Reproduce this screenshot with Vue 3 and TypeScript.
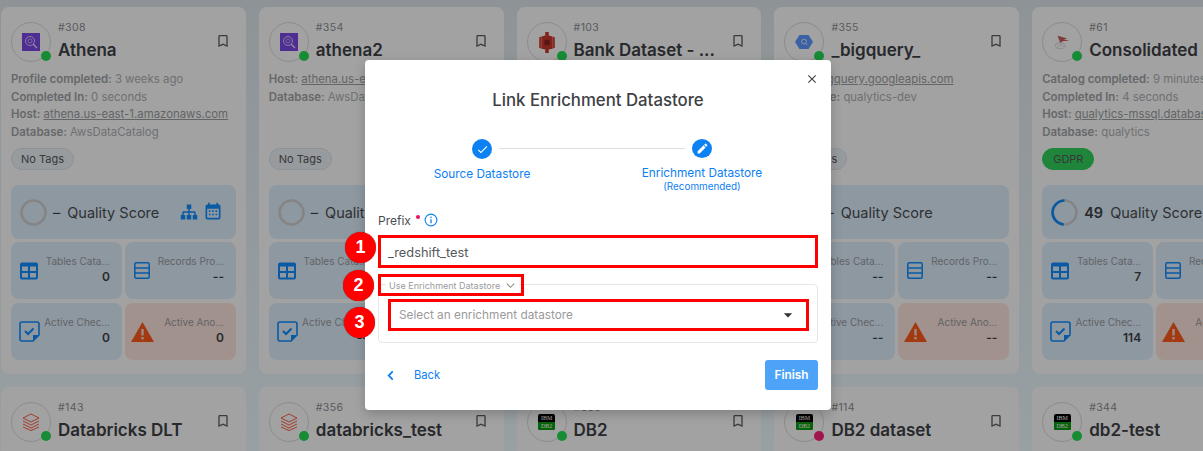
<script setup lang="ts">
interface Meta {
  label: string
  value: string
  link?: boolean
}

interface Card {
  id: number
  name: string
  logo: string
  status?: string
  meta: Meta[]
  tag: string
  score: string
  progress?: number
  tools?: boolean
  tables: string
  records: string
  checks: string
  anomalies: string
}

const cards: Card[] = [
  {
    id: 308, name: "Athena", logo: "athena",
    meta: [
      { label: "Profile completed", value: "3 weeks ago" },
      { label: "Completed In", value: "0 seconds" },
      { label: "Host", value: "athena.us-east-1.amazonaws.com", link: true },
      { label: "Database", value: "AwsDataCatalog" },
    ],
    tag: "No Tags", score: "–", tools: true, tables: "0", records: "--", checks: "0", anomalies: "0",
  },
  {
    id: 354, name: "athena2", logo: "athena",
    meta: [
      { label: "Host", value: "athena.us-east-1.amazonaws.com", link: true },
      { label: "Database", value: "AwsDataCatalog" },
    ],
    tag: "No Tags", score: "–", tables: "--", records: "--", checks: "--", anomalies: "--",
  },
  {
    id: 103, name: "Bank Dataset - ...", logo: "s3",
    meta: [],
    tag: "No Tags", score: "–", tables: "--", records: "--", checks: "--", anomalies: "--",
  },
  {
    id: 355, name: "_bigquery_", logo: "bigquery",
    meta: [
      { label: "Host", value: "bigquery.googleapis.com", link: true },
      { label: "Database", value: "qualytics-dev" },
    ],
    tag: "No Tags", score: "–", tables: "--", records: "--", checks: "--", anomalies: "--",
  },
  {
    id: 61, name: "Consolidated Balance", logo: "mssql",
    meta: [
      { label: "Catalog completed", value: "9 minutes ago" },
      { label: "Completed In", value: "4 seconds" },
      { label: "Host", value: "qualytics-mssql.database.windows.net", link: true },
      { label: "Database", value: "qualytics" },
    ],
    tag: "GDPR", score: "49", progress: 49, tables: "7", records: "--", checks: "114", anomalies: "--",
  },
]

const lowerCards = [
  { id: 143, name: "Databricks DLT", logo: "databricks", status: "ok" },
  { id: 356, name: "databricks_test", logo: "databricks", status: "ok" },
  { id: 369, name: "DB2", logo: "db2", status: "ok" },
  { id: 114, name: "DB2 dataset", logo: "db2", status: "bad" },
  { id: 344, name: "db2-test", logo: "db2", status: "ok" },
]

const bookmark = "M17,18L12,15.82L7,18V5H17M17,3H7A2,2 0 0,0 5,5V21L12,18L19,21V5C19,3.89 18.1,3 17,3Z"
</script>

<template>
  <div class="page">
    <div class="grid">
      <article v-for="card in cards" :key="card.id" class="card">
        <header class="head">
          <div class="avatar">
            <svg v-if="card.logo === 'athena'" class="logo" viewBox="0 0 18 18" width="18" height="18">
              <rect width="18" height="18" fill="#7c48e8" />
              <circle cx="8" cy="8" r="4.5" fill="none" stroke="#d8c8f5" stroke-width="1" />
              <circle cx="8" cy="8" r="2" fill="none" stroke="#d8c8f5" stroke-width=".7" />
              <path d="M11.3 11.3L15 15" stroke="#e4daf8" stroke-width="1.3" />
            </svg>
            <svg v-else-if="card.logo === 's3'" class="logo" viewBox="0 0 18 24" width="16" height="21">
              <path d="M7 0h4v4l4 1v14l-4 1v4H7v-4l-4-1V5l4-1z" fill="#c8372e" />
              <path d="M0 6l3-1v14l-3-1zM18 6l-3-1v14l3-1z" fill="#d8443a" />
              <rect x="6" y="9" width="6" height="6" fill="#8c221c" />
            </svg>
            <svg v-else-if="card.logo === 'bigquery'" class="logo" viewBox="0 0 26 20" width="18" height="14">
              <path d="M6.5 0h13L26 10l-6.500 10h-13L0 10z" fill="#5a98ff" />
              <circle cx="13" cy="9.500" r="3.500" fill="none" stroke="#dfe8fa" stroke-width="1.400" />
              <path d="M15.500 12l2.500 2.500" stroke="#dfe8fa" stroke-width="1.400" />
            </svg>
            <svg v-else-if="card.logo === 'mssql'" class="logo" viewBox="0 0 20 20" width="18" height="18">
              <path d="M5 3l11 3-4 1 6 2-7 0-3 3-1-4z" fill="#c85a60" />
              <ellipse cx="8" cy="14" rx="5.500" ry="3.500" fill="none" stroke="#d4d6d8" stroke-width="1" />
              <path d="M3 12l10 3M4 16l8-4" stroke="#d4d6d8" stroke-width=".6" />
            </svg>
            <span class="dot" />
          </div>
          <div class="title">
            <span class="num">#{{ card.id }}</span>
            <h2 class="name">{{ card.name }}</h2>
          </div>
          <svg class="mark" viewBox="0 0 24 24" width="16" height="16"><path :d="bookmark" /></svg>
        </header>

        <div class="meta">
          <p v-for="m in card.meta" :key="m.label">
            <b>{{ m.label }}:</b> <span :class="{ link: m.link }">{{ m.value }}</span>
          </p>
        </div>

        <span class="tag" :class="{ green: card.tag === 'GDPR' }">{{ card.tag }}</span>

        <div class="quality">
          <svg class="ring" viewBox="0 0 26 26" width="27" height="27">
            <circle cx="13" cy="13" r="11.500" fill="none" stroke="#cfcfcf" stroke-width="2.500" />
            <circle
              v-if="card.progress"
              cx="13" cy="13" r="11.500" fill="none" stroke="#108cff" stroke-width="2.500"
              pathLength="100" :stroke-dasharray="`${card.progress} 100`" transform="rotate(-90 13 13) scale(1 -1) translate(0 -26)"
            />
          </svg>
          <b class="score" :class="{ dash: !card.progress }">{{ card.score }}</b>
          <span class="qlabel">Quality Score</span>
          <div v-if="card.tools" class="tools">
            <svg viewBox="0 0 24 24" width="18" height="18"><path d="M9,2V8H11V11H5C3.89,11 3,11.89 3,13V16H1V22H7V16H5V13H11V16H9V22H15V16H13V13H19V16H17V22H23V16H21V13C21,11.89 20.1,11 19,11H13V8H15V2H9Z" /></svg>
            <svg viewBox="0 0 24 24" width="20" height="20"><path d="M9,10V12H7V10H9M13,10V12H11V10H13M17,10V12H15V10H17M19,3A2,2 0 0,1 21,5V19A2,2 0 0,1 19,21H5C3.89,21 3,20.1 3,19V5A2,2 0 0,1 5,3H6V1H8V3H16V1H18V3H19M19,19V8H5V19H19M9,14V16H7V14H9M13,14V16H11V14H13M17,14V16H15V14H17Z" /></svg>
          </div>
        </div>

        <div class="tiles">
          <div class="tile">
            <svg class="ticon" viewBox="0 0 20 18" width="20" height="18">
              <rect x="2" y="1.500" width="16" height="15" rx="1" fill="none" stroke="#108cff" stroke-width="2" />
              <path d="M2 3h16" stroke="#108cff" stroke-width="3" />
              <path d="M2 10h16M10 3v14" stroke="#108cff" stroke-width="2" />
            </svg>
            <div class="tbody"><span>Tables Cata...</span><b>{{ card.tables }}</b></div>
          </div>
          <div class="tile">
            <svg class="ticon narrow" viewBox="0 0 16 17" width="16" height="17">
              <rect x=".8" y=".8" width="14.400" height="15.400" rx="1.500" fill="none" stroke="#108cff" stroke-width="1.500" />
              <path d="M1 6h14M1 11h14" stroke="#108cff" stroke-width="1.500" />
            </svg>
            <div class="tbody"><span>Records Pro...</span><b>{{ card.records }}</b></div>
          </div>
          <div class="tile">
            <svg class="ticon" viewBox="0 0 21 21" width="21" height="21">
              <path d="M3 1h15a2 2 0 0 1 2 2v11l-6 6H3a2 2 0 0 1-2-2V3a2 2 0 0 1 2-2z" fill="none" stroke="#108cff" stroke-width="1.600" />
              <path d="M20 14h-6v6z" fill="#108cff" />
              <path d="M6 10l3 3 5.500-5.500" fill="none" stroke="#108cff" stroke-width="2" />
            </svg>
            <div class="tbody"><span>Active Chec...</span><b>{{ card.checks }}</b></div>
          </div>
          <div class="tile alert">
            <svg class="ticon wide" viewBox="0 0 23 20" width="23" height="20">
              <path d="M11.500 0L23 20H0z" fill="#ff5a19" />
              <rect x="10.300" y="7" width="2.400" height="6.500" fill="#f3d8d0" />
              <rect x="10.300" y="15" width="2.400" height="2.400" fill="#f3d8d0" />
            </svg>
            <div class="tbody"><span>Active Ano...</span><b>{{ card.anomalies }}</b></div>
          </div>
        </div>
      </article>

      <article v-for="card in lowerCards" :key="card.id" class="card">
        <header class="head">
          <div class="avatar">
            <svg v-if="card.logo === 'databricks'" class="logo" viewBox="0 0 18 18" width="18" height="18" fill="none" stroke="#ff5d44" stroke-width="1">
              <path d="M9 1l8 4-8 4-8-4zM1 8l8 4 8-4M1 11l8 4 8-4M1 14l8 3.500 8-3.500" />
            </svg>
            <div v-else class="db2">
              <span class="ibm">IBM</span>
              <span class="db2-low">DB2</span>
            </div>
            <span class="dot" :class="{ bad: card.status === 'bad' }" />
          </div>
          <div class="title">
            <span class="num">#{{ card.id }}</span>
            <h2 class="name">{{ card.name }}</h2>
          </div>
          <svg class="mark" viewBox="0 0 24 24" width="16" height="16"><path :d="bookmark" /></svg>
        </header>
      </article>
    </div>

    <div class="overlay">
      <section class="modal">
        <svg class="close" viewBox="0 0 24 24" width="14" height="14"><path d="M19,6.410L17.590,5L12,10.590L6.410,5L5,6.410L10.590,12L5,17.590L6.410,19L12,13.410L17.590,19L19,17.590L13.410,12L19,6.410Z" /></svg>
        <h1 class="mtitle">Link Enrichment Datastore</h1>

        <div class="stepper">
          <div class="step">
            <span class="bullet"><svg viewBox="0 0 24 24" width="13" height="13"><path d="M21,7L9,19L3.500,13.500L4.910,12.090L9,16.170L19.590,5.590L21,7Z" /></svg></span>
            <span class="slabel">Source Datastore</span>
          </div>
          <div class="step second">
            <span class="bullet"><svg viewBox="0 0 24 24" width="13" height="13"><path d="M20.710,7.040C21.100,6.650 21.100,6 20.710,5.630L18.370,3.290C18,2.900 17.350,2.900 16.960,3.290L15.120,5.120L18.870,8.870M3,17.250V21H6.750L17.810,9.930L14.060,6.180L3,17.250Z" /></svg></span>
            <span class="slabel">Enrichment Datastore</span>
            <small>(Recommended)</small>
          </div>
        </div>

        <label class="flabel">Prefix <i class="req" />
          <svg viewBox="0 0 14 14" width="14" height="14" class="info">
            <circle cx="7" cy="7" r="5.900" fill="none" stroke="#0d80f2" stroke-width="1.100" />
            <path d="M7 6.200v4" stroke="#0d80f2" stroke-width="1.300" />
            <circle cx="7" cy="4.300" r=".8" fill="#0d80f2" />
          </svg>
        </label>

        <div class="redbox prefix">
          <span class="badge one">1</span>
          <span>_redshift_test</span>
        </div>

        <div class="group">
          <div class="redbox legend">
            <span class="badge two">2</span>
            <span class="ltext">Use Enrichment Datastore
              <svg viewBox="0 0 12 12" width="11" height="11"><path d="M2 4l4 4 4-4" fill="none" stroke="#8a8a8a" stroke-width="1.100" /></svg>
            </span>
          </div>
          <div class="redbox select">
            <span class="badge three">3</span>
            <span>Select an enrichment datastore</span>
            <svg viewBox="0 0 24 24" width="20" height="20"><path d="M7,10L12,15L17,10H7Z" fill="#333" /></svg>
          </div>
        </div>

        <footer class="actions">
          <a class="back">
            <svg viewBox="0 0 10 14" width="9" height="13"><path d="M7.500 2.500L3 7l4.500 4.500" fill="none" stroke="#0d80f2" stroke-width="2" /></svg>
            Back
          </a>
          <button class="finish">Finish</button>
        </footer>
      </section>
    </div>
  </div>
</template>

<style>
html,
body {
  margin: 0;
  overflow: hidden;
}
</style>

<style scoped>
.page {
  position: relative;
  width: 1203px;
  height: 451px;
  overflow: hidden;
  padding: 7px 0 0 1px;
  box-sizing: border-box;
  background: linear-gradient(#dfe7ec, #eefaff);
  font-family: Inter, "Noto Sans", sans-serif;
}

.grid {
  display: grid;
  grid-template-columns: repeat(5, 244.8px);
  grid-auto-rows: 367px;
  gap: 13px;
}

.card {
  background: #fdfdfe;
  border-radius: 8px;
  padding: 15px 10px 0;
  box-sizing: border-box;
}

.head {
  display: flex;
  height: 40px;
}

.avatar {
  position: relative;
  flex: none;
  width: 40px;
  height: 40px;
  box-sizing: border-box;
  border: 1px solid #dcdcdc;
  border-radius: 50%;
  display: flex;
  align-items: center;
  justify-content: center;
}

.logo {
  display: block;
}

.dot {
  position: absolute;
  right: -1px;
  bottom: 0;
  width: 10px;
  height: 10px;
  border-radius: 50%;
  background: #24db53;
}

.dot.bad {
  background: #ff1e7a;
}

.db2 {
  width: 17px;
  height: 16px;
  border-radius: 2px;
  overflow: hidden;
  font-family: "Liberation Serif", serif;
  font-size: 6px;
  line-height: 8px;
  text-align: center;
  color: #fff;
  background: #000;
}

.db2 span {
  display: block;
  height: 8px;
}

.db2-low {
  background: #0c9c10;
}

.title {
  flex: 1;
  min-width: 0;
  margin-left: 7px;
}

.num {
  display: block;
  font-size: 10.5px;
  line-height: 12px;
  color: #8d8f92;
  letter-spacing: .4px;
}

.name {
  margin: 5px 0 0;
  font-size: 17px;
  line-height: 22px;
  font-weight: 600;
  color: #3e4145;
  white-space: nowrap;
}

.mark {
  flex: none;
  margin: 11px 5px 0 0;
  fill: #5c5f63;
}

.meta {
  height: 71px;
  margin: 9px 0 5px;
  font-size: 11.4px;
  line-height: 17.7px;
  color: #adb0b3;
  white-space: nowrap;
}

.meta p {
  margin: 0;
}

.meta b {
  font-weight: 600;
  color: #a0a3a6;
}

.link {
  text-decoration: underline;
  color: #9b9ea1;
}

.tag {
  display: inline-block;
  height: 22px;
  line-height: 20px;
  box-sizing: border-box;
  padding: 0 9px;
  font-size: 11px;
  color: #55585c;
  background: #eef3f7;
  border: 1px solid #dce4ea;
  border-radius: 11px;
}

.tag.green {
  background: #2fd15d;
  border-color: #2fd15d;
  padding: 0 10px;
}

.quality {
  display: flex;
  align-items: center;
  height: 54px;
  margin-top: 15px;
  padding-left: 9px;
  background: #dfeefc;
  border-radius: 8px;
}

.score {
  margin-left: 6px;
  font-size: 14.5px;
  font-weight: 600;
  color: #3e4145;
}

.score.dash {
  font-weight: 400;
}

.qlabel {
  margin-left: 7px;
  font-size: 14.5px;
  white-space: nowrap;
  color: #4a4d51;
}

.tools {
  display: flex;
  align-items: center;
  gap: 5px;
  margin-left: auto;
  margin-right: 13px;
  fill: #108cff;
}

.tiles {
  display: grid;
  grid-template-columns: 111px 111px;
  grid-auto-rows: 57px;
  gap: 4px 3px;
  margin-top: 3px;
}

.tile {
  display: flex;
  align-items: center;
  padding: 0 12px 0 8px;
  background: #dfeefc;
  border-radius: 8px;
}

.tile.alert {
  background: #fde4dd;
  padding-left: 6px;
}

.ticon {
  flex: none;
}

.ticon.narrow {
  margin-left: 1px;
}

.tbody {
  flex: 1;
  display: flex;
  flex-direction: column;
  align-items: flex-end;
  gap: 1px;
  margin-bottom: 2px;
  white-space: nowrap;
}

.tbody span {
  font-size: 10px;
  line-height: 14px;
  color: #999ca0;
}

.tbody b {
  font-size: 12px;
  line-height: 16px;
  font-weight: 600;
  color: #3e4145;
}

.overlay {
  position: absolute;
  inset: 0;
  padding: 60px 0 0 365px;
  background: rgba(0, 0, 0, .36);
}

.modal {
  position: relative;
  width: 466px;
  height: 350px;
  box-sizing: border-box;
  padding: 0 13px;
  background: #fff;
  border-radius: 4px;
  box-shadow: 0 4px 12px rgba(0, 0, 0, .2);
}

.close {
  position: absolute;
  top: 12px;
  right: 12px;
  fill: #444;
}

.mtitle {
  margin: 0;
  padding-top: 28px;
  font-size: 16.8px;
  line-height: 24px;
  font-weight: 500;
  text-align: center;
  color: #3e4145;
}

.stepper {
  display: flex;
  justify-content: center;
  margin: 27px 0 0 -12px;
  height: 52px;
}

.step {
  position: relative;
  width: 220px;
  display: flex;
  flex-direction: column;
  align-items: center;
  color: #0d80f2;
}

.step.second::before {
  content: "";
  position: absolute;
  top: 9px;
  left: -93px;
  width: 186px;
  height: 1px;
  background: #dedede;
}

.bullet {
  display: flex;
  align-items: center;
  justify-content: center;
  width: 20px;
  height: 20px;
  border-radius: 50%;
  background: #0d80f2;
  fill: #fff;
}

.slabel {
  margin-top: 7px;
  font-size: 11.8px;
  line-height: 16px;
  white-space: nowrap;
}

small {
  font-size: 9.9px;
  line-height: 10px;
}

.flabel {
  display: flex;
  align-items: center;
  height: 16px;
  margin-top: 21px;
  font-size: 12px;
  color: #4a4d51;
}

.req {
  width: 4px;
  height: 4px;
  margin: -6px 4px 0 5px;
  border-radius: 50%;
  background: #e8125f;
}

.redbox {
  position: relative;
  box-sizing: border-box;
  display: flex;
  align-items: center;
  border: 3px solid #f00;
}

.prefix {
  height: 33px;
  margin-top: 7px;
  padding: 1px 0 0 7px;
  font-size: 12.8px;
  color: #55585c;
}

.group {
  position: relative;
  height: 59px;
  margin-top: 16px;
  padding: 14px 8px 0 9px;
  box-sizing: border-box;
  border: 1px solid #e6e6e6;
  border-radius: 4px;
}

.legend {
  position: absolute;
  top: -11px;
  left: -1px;
  width: 146px;
  height: 22px;
}

.ltext {
  display: flex;
  align-items: center;
  gap: 5px;
  margin-left: 5px;
  padding: 0 3px;
  height: 14px;
  background: #fff;
  font-size: 9px;
  white-space: nowrap;
  color: #9a9a9a;
}

.select {
  height: 32px;
  padding: 0 8px 0 8px;
  justify-content: space-between;
  font-size: 11.8px;
  color: #9a9a9a;
}

.badge {
  position: absolute;
  width: 31px;
  height: 31px;
  border-radius: 50%;
  display: flex;
  align-items: center;
  justify-content: center;
  background: #f00;
  color: #fff;
  font: 700 18px "Liberation Sans", sans-serif;
  box-shadow: 0 0 1px rgba(0, 0, 0, .6);
}

.one {
  left: -36px;
  top: -6px;
}

.two {
  left: -38px;
  top: -7px;
}

.three {
  left: -47px;
  top: 5px;
}

.actions {
  display: flex;
  align-items: center;
  justify-content: space-between;
  margin-top: 17px;
}

.back {
  display: flex;
  align-items: center;
  gap: 19px;
  margin-left: 8px;
  font-size: 11.2px;
  color: #0d80f2;
}

.finish {
  width: 53px;
  height: 30px;
  border: 0;
  border-radius: 3px;
  background: #4da3f7;
  color: #fff;
  font: 600 11.8px Inter, sans-serif;
}
</style>
